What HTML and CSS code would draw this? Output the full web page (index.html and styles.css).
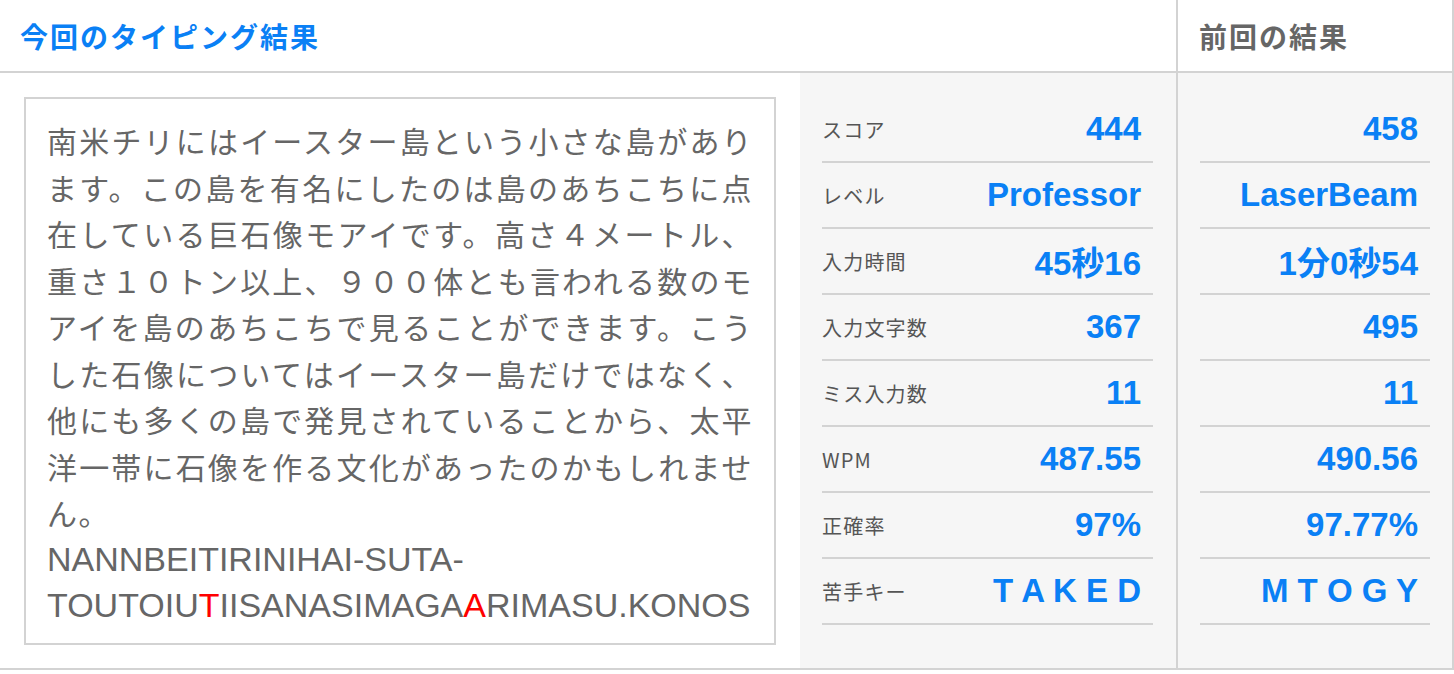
FILE: index.html
```html
<!DOCTYPE html>
<html lang="ja">
<head>
  <meta charset="utf-8">
  <link rel="stylesheet" href="styles.css">
</head>
<body>
  <div class="result">
    <div class="col current">
      <div class="col-head">
        <div class="title">今回のタイピング結果</div>
      </div>
      <div class="col-body">
        <div class="text-cell">
          <div class="text-box">
            <p class="kana">南米チリにはイースター島という小さな島があります。この島を有名にしたのは島のあちこちに点在している巨石像モアイです。高さ４メートル、重さ１０トン以上、９００体とも言われる数のモアイを島のあちこちで見ることができます。こうした石像についてはイースター島だけではなく、他にも多くの島で発見されていることから、太平洋一帯に石像を作る文化があったのかもしれません。</p>
            <p class="roma">NANNBEITIRINIHAI-SUTA-TOUTOIU<span class="miss">T</span>IISANASIMAGA<span class="miss">A</span>RIMASU.KONOS</p>
          </div>
        </div>
        <ul class="stats">
          <li class="stat"><span class="label">スコア</span><span class="value">444</span></li>
          <li class="stat"><span class="label">レベル</span><span class="value">Professor</span></li>
          <li class="stat"><span class="label">入力時間</span><span class="value">45秒16</span></li>
          <li class="stat"><span class="label">入力文字数</span><span class="value">367</span></li>
          <li class="stat"><span class="label">ミス入力数</span><span class="value">11</span></li>
          <li class="stat"><span class="label">WPM</span><span class="value">487.55</span></li>
          <li class="stat"><span class="label">正確率</span><span class="value">97%</span></li>
          <li class="stat"><span class="label">苦手キー</span><span class="value keys">T A K E D</span></li>
        </ul>
      </div>
    </div>
    <div class="col prev">
      <div class="col-head">
        <div class="title muted">前回の結果</div>
      </div>
      <ul class="stats">
        <li class="stat"><span class="value">458</span></li>
        <li class="stat"><span class="value">LaserBeam</span></li>
        <li class="stat"><span class="value">1分0秒54</span></li>
        <li class="stat"><span class="value">495</span></li>
        <li class="stat"><span class="value">11</span></li>
        <li class="stat"><span class="value">490.56</span></li>
        <li class="stat"><span class="value">97.77%</span></li>
        <li class="stat"><span class="value keys">M T O G Y</span></li>
      </ul>
    </div>
  </div>
</body>
</html>
```

FILE: styles.css
```css
body {
  margin: 0;
  background-color: white;
  font-family: "Noto Sans CJK JP", sans-serif;
  color: #666;
}

.result {
  display: flex;
  width: 1454px;
  height: 670px;
  box-sizing: border-box;
  border-bottom: 2px solid #d3d3d3;
}

.col {
  display: flex;
  flex-direction: column;
  border-right: 2px solid #d3d3d3;
}

.current {
  width: 1176px;
}

.prev {
  flex: 1;
  background-color: #f6f6f6;
}

.col-head {
  height: 71px;
  border-bottom: 2px solid #d3d3d3;
  background-color: white;
  display: flex;
  align-items: center;
  padding-left: 20px;
  flex-shrink: 0;
}

.prev .col-head {
  padding-left: 21px;
}

.title {
  font-size: 28px;
  font-weight: bold;
  letter-spacing: 2px;
  color: #0a80f5;
}

.title.muted {
  color: #666;
}

.col-body {
  display: flex;
  flex: 1;
}

.text-cell {
  width: 800px;
  box-sizing: border-box;
  padding: 24px 24px 23px 24px;
}

.text-box {
  height: 100%;
  box-sizing: border-box;
  border: 2px solid #d3d3d3;
  padding: 18px 21px 0 21px;
  overflow: hidden;
}

.kana {
  margin: 0;
  font-size: 30px;
  line-height: 46.5px;
  letter-spacing: 1.4px;
  text-align: justify;
}

.roma {
  margin: 0;
  font-family: "Liberation Sans", Arial, sans-serif;
  font-size: 34px;
  line-height: 46.5px;
}

.miss {
  color: #f00;
}

.stats {
  list-style: none;
  margin: 0;
  padding: 24px 23px 0 22px;
  background-color: #f6f6f6;
  flex: 1;
}

.prev .stats {
  padding-right: 22px;
}

.stat {
  height: 64px;
  border-bottom: 2px solid #d3d3d3;
  display: flex;
  align-items: center;
  justify-content: space-between;
  padding-right: 12px;
}

.prev .stat {
  justify-content: flex-end;
}

.label {
  font-size: 20px;
  letter-spacing: 1.2px;
  color: #555;
}

.value {
  font-family: "Liberation Sans", "Noto Sans CJK JP", sans-serif;
  font-size: 33px;
  font-weight: bold;
  color: #0a80f5;
}

.keys {
  white-space: pre;
}
```
